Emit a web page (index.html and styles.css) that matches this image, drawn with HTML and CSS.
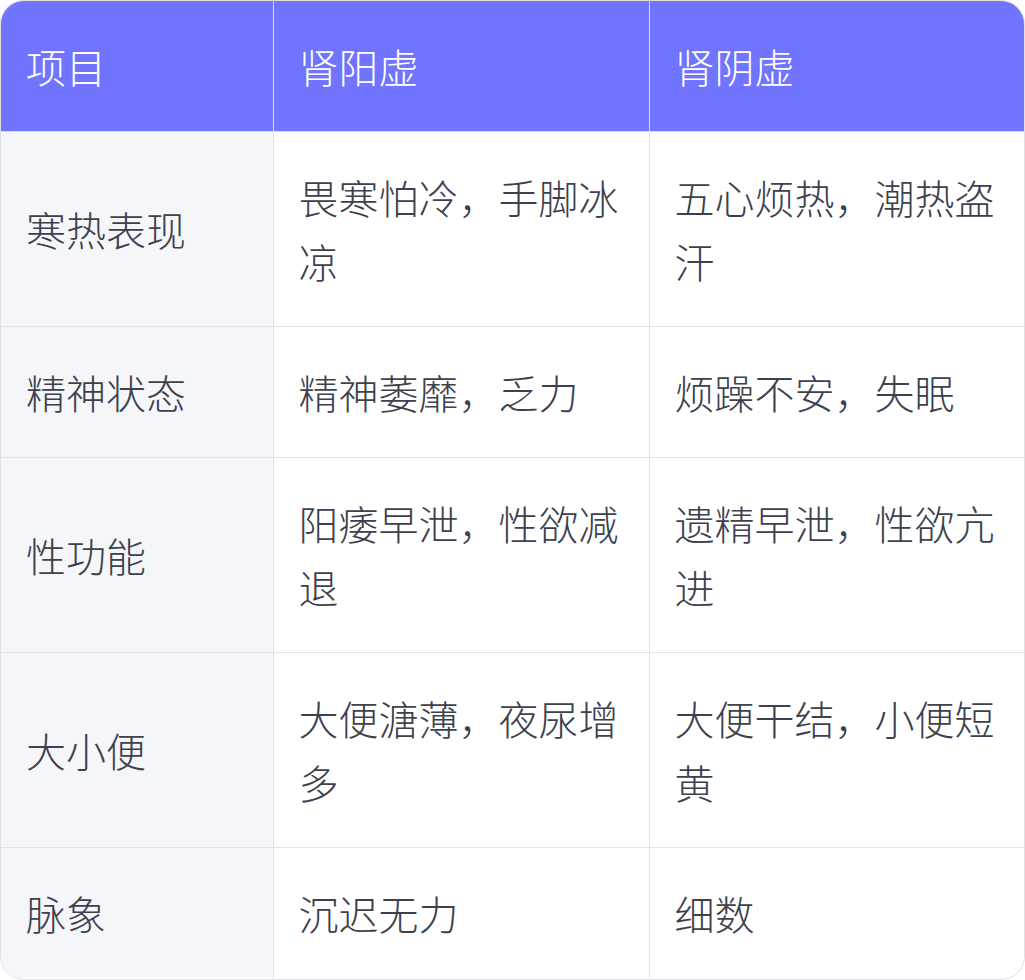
FILE: index.html
```html
<!DOCTYPE html>
<html lang="zh">
<head>
<meta charset="utf-8">
<link rel="stylesheet" href="styles.css">
</head>
<body>
<div class="wrap">
<table class="cmp">
  <colgroup>
    <col class="c1"><col class="c2"><col class="c3">
  </colgroup>
  <thead>
    <tr><th>项目</th><th>肾阳虚</th><th>肾阴虚</th></tr>
  </thead>
  <tbody>
    <tr><td>寒热表现</td><td>畏寒怕冷，手脚冰凉</td><td>五心烦热，潮热盗汗</td></tr>
    <tr><td>精神状态</td><td>精神萎靡，乏力</td><td>烦躁不安，失眠</td></tr>
    <tr><td>性功能</td><td>阳痿早泄，性欲减退</td><td>遗精早泄，性欲亢进</td></tr>
    <tr><td>大小便</td><td>大便溏薄，夜尿增多</td><td>大便干结，小便短黄</td></tr>
    <tr><td>脉象</td><td>沉迟无力</td><td>细数</td></tr>
  </tbody>
</table>
</div>
</body>
</html>
```
FILE: styles.css
```css
html, body { margin: 0; padding: 0; background: #fff; }
body { font-family: "Noto Sans CJK SC", "Noto Sans", sans-serif; }
.wrap {
  width: 1025px;
  height: 980px;
  box-sizing: border-box;
  border: 1px solid #dfe0e6;
  border-radius: 24px;
  overflow: hidden;
}
.cmp {
  width: 100%;
  border-collapse: collapse;
  table-layout: fixed;
  font-size: 40px;
  line-height: 64px;
  color: #3d404d;
  font-weight: 300;
}
.c1 { width: 272px; }
.c2 { width: 376px; }
.cmp th, .cmp td {
  padding: 33px 24px 33px 25px;
  text-align: left;
  vertical-align: middle;
  border-right: 1px solid #e2e3e8;
  border-bottom: 1px solid #e2e3e8;
  font-weight: 300;
}
.cmp th:last-child, .cmp td:last-child { border-right: none; }
.cmp tbody tr:last-child td { border-bottom: none; }
.cmp th {
  background: #7074ff;
  color: #fff;
  border-bottom-color: #d5d6f0;
  border-right-color: #d8d9f5;
}
.cmp td:first-child { background: #f5f6fa; }
```
